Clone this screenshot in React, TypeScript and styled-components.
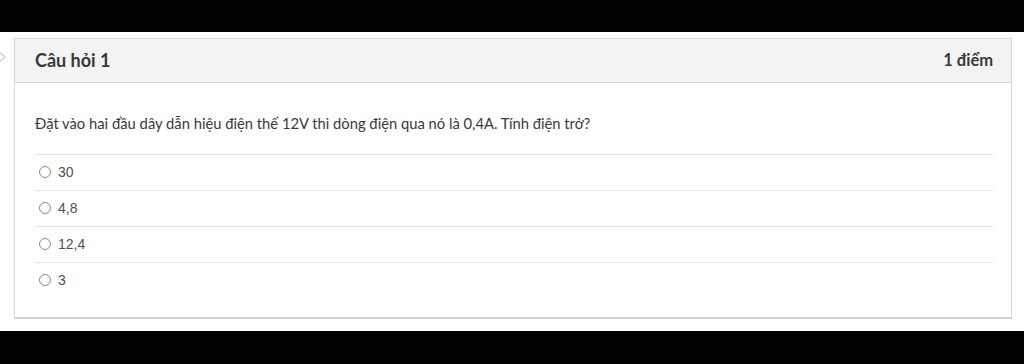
import React from "react";
import styled, { createGlobalStyle } from "styled-components";

const Global = createGlobalStyle`
  html, body { margin: 0; padding: 0; background: #000; }
  body { font-family: Lato, "Noto Sans", sans-serif; }
`;

const Screen = styled.div`
  width: 1024px;
  height: 364px;
  display: flex;
  flex-direction: column;
  background: #000;
  overflow: hidden;
`;

const TopBar = styled.div`
  height: 32px;
  background: #000;
  flex: none;
`;

const Page = styled.div`
  position: relative;
  height: 299px;
  background: #fff;
  padding: 6px 12px 0 14px;
  box-sizing: border-box;
  flex: none;
`;

const SideToggle = styled.svg`
  position: absolute;
  left: -6px;
  top: 18px;
`;

const Card = styled.section`
  border: 1px solid #d7d7d7;
  border-bottom: 2px solid #d2d2d2;
  height: 281px;
  box-sizing: border-box;
  display: flex;
  flex-direction: column;
`;

const Header = styled.header`
  height: 44px;
  flex: none;
  box-sizing: border-box;
  background: #f3f3f3;
  border-bottom: 1px solid #d8d8d8;
  display: flex;
  align-items: center;
  justify-content: space-between;
  padding: 0 18px 1px 20px;
  font-size: 18px;
  font-weight: 700;
  color: #373a3c;
`;

const Score = styled.span`
  font-size: 16.5px;
`;

const Body = styled.div`
  padding: 32px 18px 0 20px;
`;

const Question = styled.p`
  margin: 0 0 22px;
  font-size: 14.75px;
  line-height: 17px;
  color: #373a3c;
`;

const Options = styled.div`
  display: flex;
  flex-direction: column;
`;

const Option = styled.label`
  height: 36px;
  box-sizing: border-box;
  border-top: 1px solid #e3e3e3;
  display: flex;
  align-items: center;
  padding: 0 0 2px 4px;
  gap: 7px;
  font-family: "Liberation Sans", Arial, sans-serif;
  font-size: 14px;
  color: #505050;
`;

const Radio = styled.span`
  width: 10px;
  height: 10px;
  border: 1px solid #8a8a8a;
  border-radius: 50%;
  background: #fff;
  flex: none;
`;

const options = ["30", "4,8", "12,4", "3"];

export default function App() {
  return (
    <Screen>
      <Global />
      <TopBar />
      <Page>
        <SideToggle width="14" height="14" viewBox="0 0 14 14">
          <path d="M5 2 L11 7 L5 12" fill="none" stroke="#c8c8c8" strokeWidth="1.2" />
        </SideToggle>
        <Card>
          <Header>
            <span>Câu hỏi 1</span>
            <Score>1 điểm</Score>
          </Header>
          <Body>
            <Question>
              Đặt vào hai đầu dây dẫn hiệu điện thế 12V thì dòng điện qua nó là 0,4A. Tính điện trở?
            </Question>
            <Options>
              {options.map((o) => (
                <Option key={o}>
                  <Radio />
                  {o}
                </Option>
              ))}
            </Options>
          </Body>
        </Card>
      </Page>
    </Screen>
  );
}
